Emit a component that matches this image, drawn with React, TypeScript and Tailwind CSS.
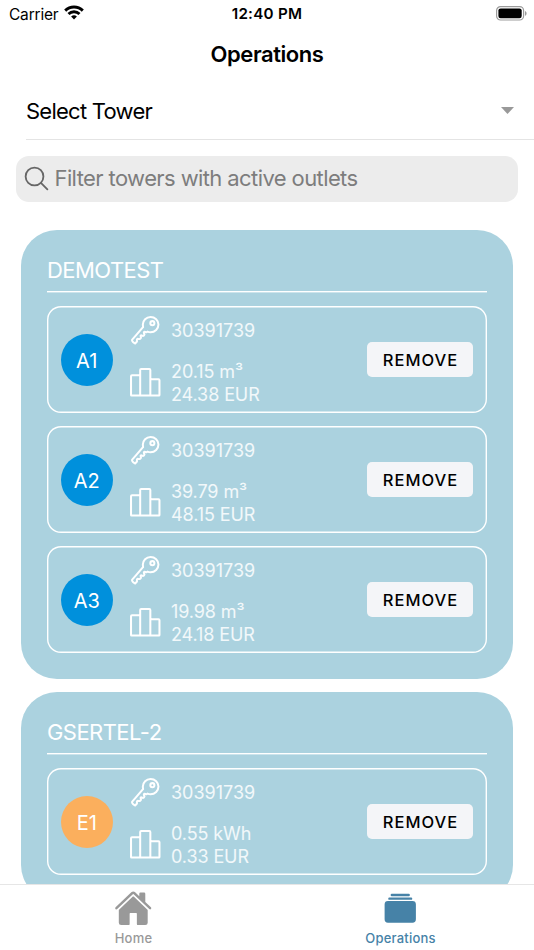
import React, { useState } from 'react';
import { IoAlbums, IoHome, IoKeyOutline, IoPodiumOutline, IoSearchOutline } from 'react-icons/io5';

interface Operation {
  outlet: string;
  userKey: string;
  usage: string;
  cost: string;
}

interface Tower {
  name: string;
  operations: Operation[];
}

const initialTowers: Tower[] = [
  {
    name: 'DEMOTEST',
    operations: [
      { outlet: 'A1', userKey: '30391739', usage: '20.15 m³', cost: '24.38 EUR' },
      { outlet: 'A2', userKey: '30391739', usage: '39.79 m³', cost: '48.15 EUR' },
      { outlet: 'A3', userKey: '30391739', usage: '19.98 m³', cost: '24.18 EUR' },
    ],
  },
  {
    name: 'GSERTEL-2',
    operations: [{ outlet: 'E1', userKey: '30391739', usage: '0.55 kWh', cost: '0.33 EUR' }],
  },
];

const StatusBar = () => (
  <div className="grid h-7 shrink-0 grid-cols-3 items-center pl-[9px] pr-[7px] text-black">
    <div className="flex items-center gap-[6px]">
      <span className="pt-px text-[15.5px] tracking-[-0.2px]">Carrier</span>
      <svg className="-mt-[3px]" width="20" height="15" viewBox="0 0 20 15" fill="none" stroke="currentColor" strokeWidth="2.9">
        <path d="M1.2 5.6a12.6 12.6 0 0 1 17.6 0" />
        <path d="M4.5 9a7.9 7.9 0 0 1 11 0" />
        <path d="M10 14.5l-2.9-2.9a4.2 4.2 0 0 1 5.8 0z" fill="currentColor" stroke="none" />
      </svg>
    </div>
    <span className="-ml-0.5 text-center text-[15.2px] font-semibold tracking-[0.25px]">12:40 PM</span>
    <svg className="-mt-[2px] justify-self-end" width="31" height="15" viewBox="0 0 31 15">
      <rect x="0.6" y="0.6" width="27" height="13.4" rx="4" fill="none" stroke="#9b9b9b" strokeWidth="1.2" />
      <rect x="2.4" y="2.4" width="23.3" height="9.8" rx="2.2" fill="#000" />
      <path d="M29 5v4.7c1-.4 1.6-1.3 1.6-2.3S30 5.4 29 5z" fill="#9b9b9b" />
    </svg>
  </div>
);

const OperationItem = ({ operation, onRemove }: { operation: Operation; onRemove: () => void }) => {
  // A = water outlet, E = electricity outlet
  const isWater = operation.outlet.startsWith('A');

  return (
    <div className="flex h-[107px] items-center rounded-[14px] px-[14px] shadow-[inset_0_0_0_1.4px_#fff]">
      <div
        className={`flex size-[51.5px] shrink-0 items-center justify-center rounded-full pt-0.5 text-[20px] text-white ${
          isWater ? 'bg-[#0090dc]' : 'bg-[#fbaf5d]'
        }`}
      >
        {operation.outlet}
      </div>
      <div className="ml-4 flex flex-1 flex-col gap-[17px] pt-[6px] text-[18px] leading-[23px] text-white/85">
        <div className="flex items-center gap-[10px]">
          <IoKeyOutline className="-mt-[6px] -mb-1 size-[32.5px] text-white" />
          <span className="-mt-0.5">{operation.userKey}</span>
        </div>
        <div className="flex items-center gap-[10px]">
          <IoPodiumOutline className="size-[32.5px] text-white" />
          <div className="tracking-[-0.1px]">
            <div>{operation.usage}</div>
            <div>{operation.cost}</div>
          </div>
        </div>
      </div>
      <button
        onClick={onRemove}
        className="h-[35px] w-[106px] rounded-[5px] bg-[#f4f5f8] pt-0.5 pl-px text-[16.5px] font-medium tracking-[1.05px] text-black"
      >
        REMOVE
      </button>
    </div>
  );
};

const App: React.FC = () => {
  const [towers, setTowers] = useState<Tower[]>(initialTowers);
  const [filter, setFilter] = useState('');

  const removeOperation = (towerName: string, outlet: string) => {
    setTowers(prev =>
      prev.map(tower =>
        tower.name === towerName
          ? { ...tower, operations: tower.operations.filter(op => op.outlet !== outlet) }
          : tower
      )
    );
  };

  const visibleTowers = towers.filter(tower => tower.name.toLowerCase().includes(filter.toLowerCase()));

  return (
    <div className="flex h-[950px] w-[534px] flex-col overflow-hidden bg-white font-[Inter,sans-serif]">
      <StatusBar />
      <h1 className="h-[55px] shrink-0 text-center text-[22px] leading-[53px] font-semibold tracking-[-0.45px] text-black">
        Operations
      </h1>

      <div className="ml-[26px] flex h-[57px] shrink-0 items-center justify-between border-b border-[#e4e4e4] pr-5">
        <span className="text-[22px] tracking-[-0.75px] text-black">Select Tower</span>
        <svg className="-mt-[2px]" width="13" height="7" viewBox="0 0 13 7">
          <path d="M0 0h13L6.5 7z" fill="#999" />
        </svg>
      </div>

      <div className="mx-4 mt-[15.5px] flex h-[46.5px] shrink-0 items-center rounded-[13px] bg-[#ececec] pl-[6px]">
        <IoSearchOutline className="size-[29px] text-[#666]" />
        <input
          value={filter}
          onChange={e => setFilter(e.target.value)}
          placeholder="Filter towers with active outlets"
          className="ml-[3.5px] flex-1 bg-transparent text-[22px] tracking-[-0.6px] outline-none placeholder:text-[#7d7d7d]"
        />
      </div>

      <div className="mt-[28.3px] flex min-h-0 flex-1 flex-col gap-[13px] overflow-hidden px-[21px]">
        {visibleTowers.map(tower => (
          <section key={tower.name} className="shrink-0 rounded-[36px] bg-[#abd2df] px-[26px] pt-[22px] pb-[26px]">
            <h2 className="mb-[15px] h-[39px] bg-[#abd2df] text-[22px] leading-[37px] tracking-[-0.55px] text-white shadow-[0_1.4px_0_0_#fff]">
              {tower.name}
            </h2>
            <div className="flex flex-col gap-[13px]">
              {tower.operations.map(op => (
                <OperationItem
                  key={op.outlet}
                  operation={op}
                  onRemove={() => removeOperation(tower.name, op.outlet)}
                />
              ))}
            </div>
          </section>
        ))}
      </div>

      <nav className="grid h-[66px] shrink-0 grid-cols-2 border-t border-[#e6e6e6] bg-white text-[13px] font-medium tracking-[0.2px]">
        <a className="flex flex-col items-center pt-1 text-[#999]">
          <IoHome className="size-[38.5px]" />
          <span className="leading-[21px]">Home</span>
        </a>
        <a className="flex flex-col items-center pt-1 text-[#4682a7]">
          <IoAlbums className="size-[38.5px]" />
          <span className="leading-[21px]">Operations</span>
        </a>
      </nav>
    </div>
  );
};

export default App;
